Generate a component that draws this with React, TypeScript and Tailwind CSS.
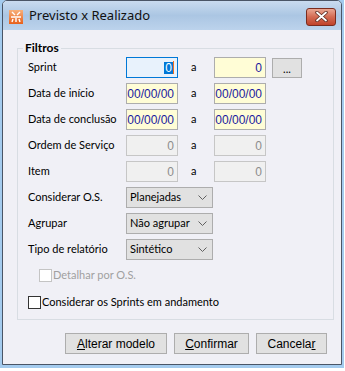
import { ReactNode } from 'react';
import clsx from 'clsx';

const ui = "font-['Lato','Noto_Sans',sans-serif] text-[11px] text-black";
const mono = "font-['Liberation_Sans',Arial,sans-serif] text-[12px]";

const Field = ({ value, kind }: { value: string, kind: 'focus' | 'yellow' | 'off' }) => (
    <div className={ clsx(
        'flex h-[21px] w-[52px] items-center justify-end border pr-[3px] leading-none',
        mono,
        kind === 'focus' && 'border-[#0078d7] bg-[#e8f2fc]',
        kind === 'yellow' && 'border-[#adadad] bg-[#fffdd6] text-[#1a1aa0]',
        kind === 'off' && 'border-[#c6c6c6] bg-[#f0f0f0] text-[#8c8c8c]',
    ) }>
        { kind === 'focus'
            ? <>
                <span className="bg-[#0078d7] px-[1px] text-white">{ value }</span>
                <span className="h-[13px] w-[1px] bg-[#f07020]"/>
            </>
            : value }
    </div>
)

const Select = ({ value }: { value: string }) => (
    <div className="flex h-[21px] w-[87px] items-center justify-between whitespace-nowrap border border-[#adadad] bg-[#e1e1e1] pl-[3px] pr-[5px]">
        <span>{ value }</span>
        <svg width="9" height="5" viewBox="0 0 9 5">
            <path d="M0.5 0.5 L4.5 4.5 L8.5 0.5" fill="none" stroke="#606060" strokeWidth="1"/>
        </svg>
    </div>
)

const Row = ({ label, children }: { label: string, children: ReactNode }) => (
    <div className="flex h-[21px] items-center">
        <span className="w-[98px] whitespace-nowrap">{ label }</span>
        { children }
    </div>
)

const Between = () => <span className="w-[36px] pl-[13px]">a</span>

const Check = ({ label, disabled }: { label: string, disabled?: boolean }) => (
    <div className={ clsx('flex h-[14px] items-center whitespace-nowrap', disabled && 'pl-[11px] text-[#a0a0a0]') }>
        <span className={ clsx('h-[13px] w-[13px] border bg-white', disabled ? 'border-[#c4c4c4]' : 'border-[#333]') }/>
        <span className="ml-[1px]">{ label }</span>
    </div>
)

const Button = ({ width, children }: { width: string, children: ReactNode }) => (
    <button className={ clsx('flex h-[21px] items-center justify-center border border-[#adadad] bg-[#e1e1e1]', mono, 'text-[11px]', width) }>
        { children }
    </button>
)

export default function App() {
    return (
        <div className={ clsx('h-[371px] w-[345px] bg-white', ui) }>
            <div className="h-[368px] w-[344px] bg-[#a4cbee] px-[2px] pb-[3px]">
                <div className="flex h-full flex-col rounded-t-[5px] border border-[#4a5566] bg-[#f0f0f6]">
                    <header className="flex h-[29px] items-center rounded-t-[4px] bg-gradient-to-b from-[#c9dbef] via-[#abc6e3] to-[#bcd3ec] pl-[6px] pr-[5px]">
                        <svg width="14" height="14" viewBox="0 0 14 14" className="mt-[2px]">
                            <defs>
                                <linearGradient id="ic" x1="0" y1="0" x2="0" y2="1">
                                    <stop offset="0" stopColor="#f7b07a"/>
                                    <stop offset="1" stopColor="#e8601a"/>
                                </linearGradient>
                            </defs>
                            <rect width="14" height="14" fill="url(#ic)"/>
                            <path d="M3 2 L6 5 M11 2 L8 5 M2 7 H12 M4 9 L3 12 M10 9 L11 12 M7 8 V12" stroke="#fff" strokeWidth="1.4" fill="none"/>
                        </svg>
                        <span className="ml-[6px] mt-[1px] font-['Noto_Sans',sans-serif] text-[13px] text-[#111]">Previsto x Realizado</span>
                        <div className="ml-auto mt-[2px] flex h-[18px] w-[30px] items-center justify-center rounded-[3px] border border-[#7a2c1e] bg-gradient-to-b from-[#e9a793] via-[#d36a52] to-[#c0422a]">
                            <svg width="13" height="11" viewBox="0 0 13 11">
                                <path d="M2 1.5 L11 9.5 M11 1.5 L2 9.5" stroke="#5a2a22" strokeWidth="3.4" strokeLinecap="round"/>
                                <path d="M2 1.5 L11 9.5 M11 1.5 L2 9.5" stroke="#fff" strokeWidth="1.8" strokeLinecap="round"/>
                            </svg>
                        </div>
                    </header>

                    <main className="flex flex-col pl-[14px]">
                        <fieldset className="mt-[10px] w-[317px] border border-[#d8dde3] pb-[10px] pl-[10px]">
                            <legend className="ml-[-5px] px-[2px] text-[12px] font-bold leading-[16px]">Filtros</legend>
                            <div className="mt-[1px] flex flex-col gap-[5px]">
                                <Row label="Sprint">
                                    <Field value="0" kind="focus"/>
                                    <Between/>
                                    <Field value="0" kind="yellow"/>
                                    <button className="ml-[6px] flex h-[20px] w-[30px] items-end justify-center border border-[#adadad] bg-[#e1e1e1] pb-[3px] leading-none">...</button>
                                </Row>
                                <Row label="Data de início">
                                    <Field value="00/00/00" kind="yellow"/>
                                    <Between/>
                                    <Field value="00/00/00" kind="yellow"/>
                                </Row>
                                <Row label="Data de conclusão">
                                    <Field value="00/00/00" kind="yellow"/>
                                    <Between/>
                                    <Field value="00/00/00" kind="yellow"/>
                                </Row>
                                <Row label="Ordem de Serviço">
                                    <Field value="0" kind="off"/>
                                    <Between/>
                                    <Field value="0" kind="off"/>
                                </Row>
                                <Row label="Item">
                                    <Field value="0" kind="off"/>
                                    <Between/>
                                    <Field value="0" kind="off"/>
                                </Row>
                                <Row label="Considerar O.S.">
                                    <Select value="Planejadas"/>
                                </Row>
                                <Row label="Agrupar">
                                    <Select value="Não agrupar"/>
                                </Row>
                                <Row label="Tipo de relatório">
                                    <Select value="Sintético"/>
                                </Row>
                            </div>
                            <div className="mt-[8px] flex flex-col gap-[13px]">
                                <Check label="Detalhar por O.S." disabled/>
                                <Check label="Considerar os Sprints em andamento"/>
                            </div>
                        </fieldset>

                        <div className="mt-[13px] flex gap-[7px] pl-[48px]">
                            <Button width="w-[102px]"><span><u>A</u>lterar modelo</span></Button>
                            <Button width="w-[75px]"><span><u>C</u>onfirmar</span></Button>
                            <Button width="w-[71px]"><span>Cancela<u>r</u></span></Button>
                        </div>
                    </main>
                </div>
            </div>
        </div>
    )
}
